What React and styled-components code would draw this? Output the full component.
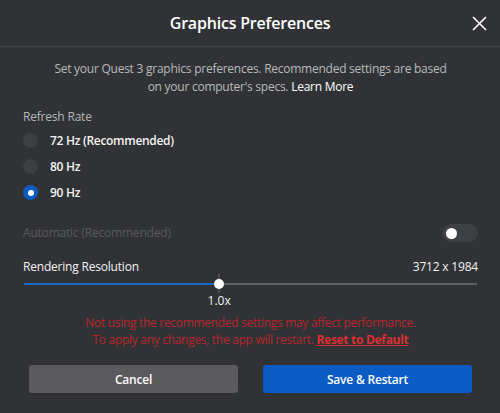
import React, { useState } from "react";
import styled, { createGlobalStyle } from "styled-components";

const GlobalStyle = createGlobalStyle`
  html, body {
    margin: 0;
    padding: 0;
    background: #313235;
  }
  * {
    box-sizing: border-box;
  }
`;

const Dialog = styled.div`
  width: 500px;
  height: 413px;
  background: #313235;
  color: #ffffff;
  font-family: "Open Sans", "Noto Sans", sans-serif;
  display: flex;
  flex-direction: column;
`;

const Header = styled.div`
  height: 47px;
  display: flex;
  align-items: center;
  justify-content: center;
  position: relative;
  border-bottom: 1px solid #414245;
`;

const Title = styled.h1`
  margin: 0;
  font-size: 16px;
  font-weight: 600;
  color: #ffffff;
  letter-spacing: -0.2px;
`;

const CloseButton = styled.button`
  position: absolute;
  right: 12px;
  top: 14px;
  width: 18px;
  height: 18px;
  padding: 0;
  border: none;
  background: transparent;
  cursor: pointer;
  display: flex;
  align-items: center;
  justify-content: center;
`;

const Body = styled.div`
  padding: 13px 22px 0 23px;
  display: flex;
  flex-direction: column;
`;

const Description = styled.p`
  margin: 0;
  text-align: center;
  font-size: 12px;
  line-height: 18px;
  color: #b9babc;
  letter-spacing: -0.25px;
  a {
    color: #ffffff;
    text-decoration: none;
  }
`;

const SectionLabel = styled.div`
  margin-top: 13px;
  font-size: 12px;
  color: #b4b5b7;
  line-height: 16px;
  letter-spacing: -0.2px;
`;

const RadioList = styled.div`
  display: flex;
  flex-direction: column;
  gap: 9px;
  margin-top: 7px;
`;

const RadioRow = styled.label`
  display: flex;
  align-items: center;
  gap: 12px;
  height: 17px;
  font-size: 12px;
  font-weight: 600;
  color: #f2f2f2;
  letter-spacing: -0.3px;
  cursor: pointer;
`;

const RadioDot = styled.span`
  width: 15px;
  height: 15px;
  border-radius: 50%;
  background: ${(p) => (p.$checked ? "#0c5cc2" : "#3e3f42")};
  display: flex;
  align-items: center;
  justify-content: center;
  &::after {
    content: "";
    width: 6px;
    height: 6px;
    border-radius: 50%;
    background: #ffffff;
    display: ${(p) => (p.$checked ? "block" : "none")};
  }
`;

const SettingRow = styled.div`
  display: flex;
  align-items: center;
  justify-content: space-between;
  font-size: 12px;
  line-height: 16px;
  letter-spacing: -0.2px;
  color: ${(p) => (p.$dim ? "#595a5d" : "#f2f2f2")};
`;

const AutoRow = styled(SettingRow)`
  margin-top: 22px;
  height: 20px;
`;

const ResRow = styled(SettingRow)`
  margin-top: 16px;
`;

const Toggle = styled.div`
  width: 36px;
  height: 18px;
  border-radius: 9px;
  background: #3f4043;
  padding: 3px;
  display: flex;
  align-items: center;
  &::after {
    content: "";
    width: 11px;
    height: 11px;
    border-radius: 50%;
    background: #ffffff;
    margin-left: 1px;
  }
`;

const SliderWrap = styled.div`
  position: relative;
  height: 18px;
  display: flex;
  align-items: center;
  padding: 0 1px;
`;

const Track = styled.div`
  width: 100%;
  height: 2px;
  background: #5d5e61;
  position: relative;
`;

const Fill = styled.div`
  position: absolute;
  left: 0;
  top: 0;
  height: 2px;
  background: #1a67c9;
`;

const Tick = styled.div`
  position: absolute;
  top: -9px;
  width: 1px;
  height: 19px;
  background: #6b6c6f;
  transform: translateX(-50%);
`;

const Thumb = styled.div`
  position: absolute;
  top: -4px;
  width: 10px;
  height: 10px;
  border-radius: 50%;
  background: #ffffff;
  transform: translateX(-50%);
`;

const ScaleLabel = styled.div`
  position: relative;
  height: 16px;
  font-size: 12px;
  line-height: 16px;
  color: #f2f2f2;
  span {
    position: absolute;
    transform: translateX(-50%);
  }
`;

const Warning = styled.div`
  margin-top: 5px;
  text-align: center;
  font-size: 12px;
  line-height: 17px;
  letter-spacing: -0.3px;
  color: #b8262c;
  a {
    color: #dc2f33;
    font-weight: 700;
    text-decoration: underline;
  }
`;

const Footer = styled.div`
  display: flex;
  gap: 25px;
  padding: 0 28px 0 29px;
  margin-top: 17px;
`;

const Button = styled.button`
  flex: 1;
  height: 28px;
  border: none;
  border-radius: 3px;
  font-family: "Open Sans", "Noto Sans", sans-serif;
  font-size: 12px;
  font-weight: 600;
  letter-spacing: -0.2px;
  color: #ffffff;
  background: ${(p) => (p.$primary ? "#0b5bc4" : "#5b5b5d")};
  cursor: pointer;
`;

const rates = ["72 Hz (Recommended)", "80 Hz", "90 Hz"];

export default function App() {
  const [rate, setRate] = useState(2);
  const value = 43.1;

  return (
    <>
      <GlobalStyle />
      <Dialog>
        <Header>
          <Title>Graphics Preferences</Title>
          <CloseButton aria-label="Close">
            <svg width="15" height="15" viewBox="0 0 15 15">
              <path d="M1 1 L14 14 M14 1 L1 14" stroke="#ffffff" strokeWidth="1.6" />
            </svg>
          </CloseButton>
        </Header>
        <Body>
          <Description>
            Set your Quest 3 graphics preferences. Recommended settings are based
            <br />
            on your computer's specs. <a href="#">Learn More</a>
          </Description>
          <SectionLabel>Refresh Rate</SectionLabel>
          <RadioList>
            {rates.map((r, i) => (
              <RadioRow key={r} onClick={() => setRate(i)}>
                <RadioDot $checked={rate === i} />
                {r}
              </RadioRow>
            ))}
          </RadioList>
          <AutoRow $dim>
            <span>Automatic (Recommended)</span>
            <Toggle />
          </AutoRow>
          <ResRow>
            <span>Rendering Resolution</span>
            <span>3712 x 1984</span>
          </ResRow>
          <SliderWrap>
            <Track>
              <Fill style={{ width: `${value}%` }} />
              <Tick style={{ left: `${value}%` }} />
              <Thumb style={{ left: `${value}%` }} />
            </Track>
          </SliderWrap>
          <ScaleLabel>
            <span style={{ left: `${value}%` }}>1.0x</span>
          </ScaleLabel>
          <Warning>
            Not using the recommended settings may affect performance.
            <br />
            To apply any changes, the app will restart. <a href="#">Reset to Default</a>
          </Warning>
        </Body>
        <Footer>
          <Button>Cancel</Button>
          <Button $primary>Save &amp; Restart</Button>
        </Footer>
      </Dialog>
    </>
  );
}
